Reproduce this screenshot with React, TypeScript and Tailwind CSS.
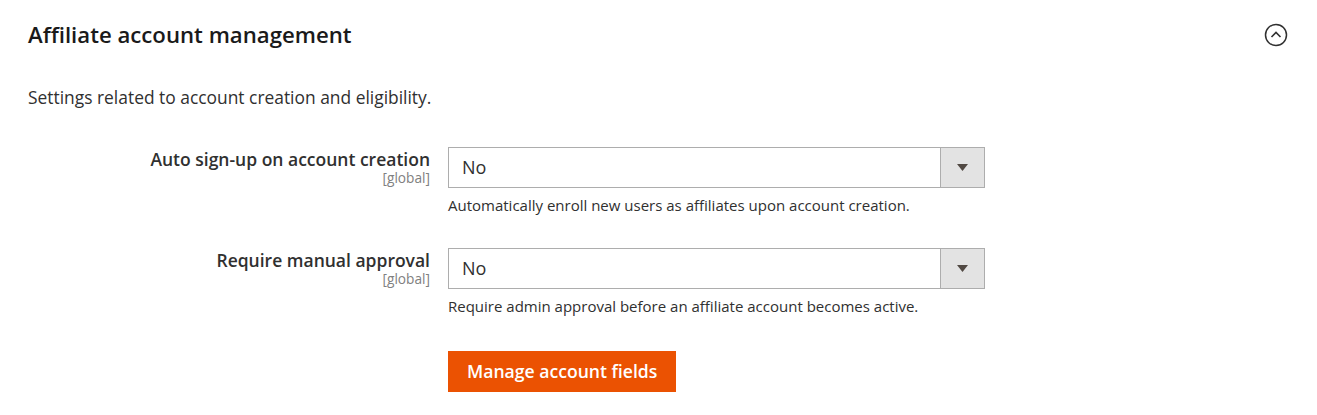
import React from "react";

function Row({ label, note, top }: { label: string; note: string; top: string }) {
  return (
    <div className={`flex ${top}`}>
      <div className="w-[402px] flex flex-col items-end">
        <span className="text-[17.5px] leading-[24px] font-semibold text-[#303030]">{label}</span>
        <span className="text-[13.7px] leading-[14px] text-[#808080]">[global]</span>
      </div>
      <div className="ml-[18px] w-[537px] flex flex-col">
        <div className="h-[41px] flex border border-[#adadad] bg-white">
          <div className="flex-1 flex items-center pl-[13px] text-[18px] text-[#303030]">No</div>
          <div className="w-[44px] bg-[#e3e3e3] border-l border-[#adadad] flex items-center justify-center">
            <svg width="11" height="7" viewBox="0 0 11 7">
              <path d="M0 0 H11 L5.5 7 Z" fill="#514943" />
            </svg>
          </div>
        </div>
        <div className="mt-[8px] text-[15px] leading-[18px] text-[#303030]">{note}</div>
      </div>
    </div>
  );
}

export default function App() {
  return (
    <div
      className="w-[1317px] h-[415px] bg-white pl-[28px] pt-[21px]"
      style={{ fontFamily: '"Open Sans", "Noto Sans", sans-serif' }}
    >
      <div className="flex items-center justify-between pr-[29px]">
        <h2 className="text-[22.2px] leading-[28px] font-semibold text-[#1a1a1a]">Affiliate account management</h2>
        <svg width="24" height="24" viewBox="0 0 24 24">
          <circle cx="12" cy="12" r="10.5" fill="none" stroke="#303030" strokeWidth="1.5" />
          <path d="M7.5 14 L12 9.5 L16.5 14" fill="none" stroke="#303030" strokeWidth="1.6" />
        </svg>
      </div>
      <p className="mt-[37px] text-[17.4px] leading-[22px] text-[#303030]">
        Settings related to account creation and eligibility.
      </p>
      <Row
        top="mt-[39px]"
        label="Auto sign-up on account creation"
        note="Automatically enroll new users as affiliates upon account creation."
      />
      <Row
        top="mt-[34px]"
        label="Require manual approval"
        note="Require admin approval before an affiliate account becomes active."
      />
      <div className="ml-[420px] mt-[36px]">
        <button className="h-[41px] px-[19px] bg-[#eb5202] text-white text-[17.6px] font-semibold">
          Manage account fields
        </button>
      </div>
    </div>
  );
}
